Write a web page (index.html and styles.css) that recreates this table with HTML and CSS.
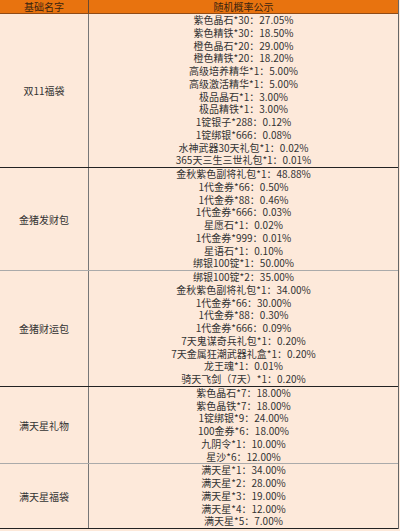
FILE: index.html
```html
<!DOCTYPE html>
<html lang="zh">
<head>
<meta charset="utf-8">
<title>随机概率公示</title>
<link rel="stylesheet" href="styles.css">
</head>
<body>
<div class="sheet">
  <div class="head">
    <div class="name">基础名字</div>
    <div class="title">随机概率公示</div>
  </div>
  <div class="group dark">
    <div class="name">双11福袋</div>
    <div class="items">
      <div class="item">紫色晶石*30：27.05%</div>
      <div class="item">紫色精铁*30：18.50%</div>
      <div class="item">橙色晶石*20：29.00%</div>
      <div class="item">橙色精铁*20：18.20%</div>
      <div class="item">高级培养精华*1：5.00%</div>
      <div class="item">高级激活精华*1：5.00%</div>
      <div class="item">极品晶石*1：3.00%</div>
      <div class="item">极品精铁*1：3.00%</div>
      <div class="item">1锭银子*288：0.12%</div>
      <div class="item">1锭绑银*666：0.08%</div>
      <div class="item">水神武器30天礼包*1：0.02%</div>
      <div class="item">365天三生三世礼包*1：0.01%</div>
    </div>
  </div>
  <div class="group light">
    <div class="name">金猪发财包</div>
    <div class="items">
      <div class="item">金秋紫色副将礼包*1：48.88%</div>
      <div class="item">1代金券*66：0.50%</div>
      <div class="item">1代金券*88：0.46%</div>
      <div class="item">1代金券*666：0.03%</div>
      <div class="item">星愿石*1：0.02%</div>
      <div class="item">1代金券*999：0.01%</div>
      <div class="item">星语石*1：0.10%</div>
      <div class="item">绑银100锭*1：50.00%</div>
    </div>
  </div>
  <div class="group dark">
    <div class="name">金猪财运包</div>
    <div class="items">
      <div class="item">绑银100锭*2：35.00%</div>
      <div class="item">金秋紫色副将礼包*1：34.00%</div>
      <div class="item">1代金券*66：30.00%</div>
      <div class="item">1代金券*88：0.30%</div>
      <div class="item">1代金券*666：0.09%</div>
      <div class="item">7天鬼谋奇兵礼包*1：0.20%</div>
      <div class="item">7天金属狂潮武器礼盒*1：0.20%</div>
      <div class="item">龙王魂*1：0.01%</div>
      <div class="item">骑天飞剑（7天）*1：0.20%</div>
    </div>
  </div>
  <div class="group light">
    <div class="name">满天星礼物</div>
    <div class="items">
      <div class="item">紫色晶石*7：18.00%</div>
      <div class="item">紫色晶铁*7：18.00%</div>
      <div class="item">1锭绑银*9：24.00%</div>
      <div class="item">100金券*6：18.00%</div>
      <div class="item">九阴令*1：10.00%</div>
      <div class="item">星沙*6：12.00%</div>
    </div>
  </div>
  <div class="group dark">
    <div class="name">满天星福袋</div>
    <div class="items">
      <div class="item">满天星*1：34.00%</div>
      <div class="item">满天星*2：28.00%</div>
      <div class="item">满天星*3：19.00%</div>
      <div class="item">满天星*4：12.00%</div>
      <div class="item">满天星*5：7.00%</div>
    </div>
  </div>
</div>
</body>
</html>
```
FILE: styles.css
```css
html, body {
  margin: 0;
  padding: 0;
  background: #fde9da;
}
.sheet {
  width: 398px;
  border-right: 1px solid #666;
  background: #fde9da;
  font-family: "Noto Sans CJK SC", "Noto Sans", sans-serif;
  font-size: 10px;
  color: #333;
}
.head {
  display: grid;
  grid-template-columns: 89px 1fr;
  height: 13px;
  background: #e8730f;
  border-bottom: 1px solid #8f4b16;
  color: #3a2410;
}
.head .name, .head .title {
  display: flex;
  align-items: center;
  justify-content: center;
  line-height: 13px;
}
.head .name {
  border-right: 1px solid #6b4a30;
}
.group {
  display: grid;
  grid-template-columns: 89px 1fr;
}
.group.dark {
  border-bottom: 1px solid #222;
}
.group.light {
  border-bottom: 1px solid #aaa;
}
.group .name {
  border-right: 1px solid #777;
  display: flex;
  align-items: center;
  justify-content: center;
}
.items {
  display: flex;
  flex-direction: column;
}
.item {
  height: 12.75px;
  line-height: 12.75px;
  text-align: center;
  white-space: nowrap;
}
```
